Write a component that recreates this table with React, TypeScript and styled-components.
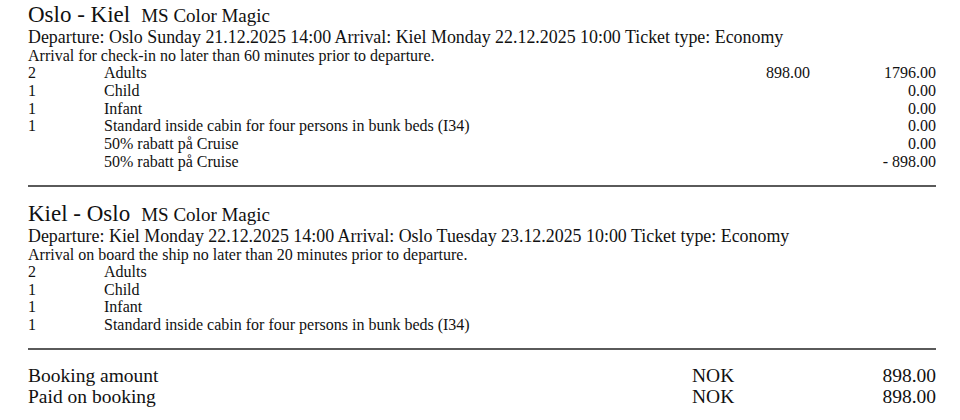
import styled, { createGlobalStyle } from 'styled-components'

const GlobalStyle = createGlobalStyle`
  html, body {
    margin: 0;
    padding: 0;
    background: #ffffff;
  }
  body {
    font-family: "Liberation Serif", "Times New Roman", serif;
    color: #111111;
  }
`

const Page = styled.div`
  padding: 3px 24px 0 28px;
  width: 960px;
  box-sizing: border-box;
`

const Section = styled.section`
  display: flex;
  flex-direction: column;
`

const TitleRow = styled.div`
  display: flex;
  align-items: baseline;
  gap: 11px;
  line-height: 24px;
`

const Route = styled.span`
  font-size: 23px;
`

const Ship = styled.span`
  font-size: 19px;
`

const TripInfo = styled.div`
  font-size: 17.9px;
  line-height: 19px;
`

const Notice = styled.div`
  font-size: 16px;
  line-height: 17px;
`

const Items = styled.div`
  display: grid;
  grid-template-columns: 76px 1fr 120px 126px;
  font-size: 16px;
  line-height: 17.8px;
`

const Cell = styled.div<{ $right?: boolean }>`
  text-align: ${p => (p.$right ? 'right' : 'left')};
  white-space: nowrap;
`

const Rule = styled.hr`
  border: none;
  border-top: 2px solid #5a5a5a;
  margin: 14px 0 15px;
`

const Totals = styled.div`
  display: grid;
  grid-template-columns: 1fr 118px 126px;
  font-size: 19.5px;
  line-height: 21px;
`

interface Item {
  qty: string
  text: string
  unit?: string
  total?: string
}

interface Leg {
  route: string
  ship: string
  info: string
  notice: string
  items: Item[]
}

const legs: Leg[] = [
  {
    route: 'Oslo - Kiel',
    ship: 'MS Color Magic',
    info: 'Departure: Oslo Sunday 21.12.2025 14:00 Arrival: Kiel Monday 22.12.2025 10:00 Ticket type: Economy',
    notice: 'Arrival for check-in no later than 60 minutes prior to departure.',
    items: [
      { qty: '2', text: 'Adults', unit: '898.00', total: '1796.00' },
      { qty: '1', text: 'Child', total: '0.00' },
      { qty: '1', text: 'Infant', total: '0.00' },
      { qty: '1', text: 'Standard inside cabin for four persons in bunk beds (I34)', total: '0.00' },
      { qty: '', text: '50% rabatt på Cruise', total: '0.00' },
      { qty: '', text: '50% rabatt på Cruise', total: '- 898.00' },
    ],
  },
  {
    route: 'Kiel - Oslo',
    ship: 'MS Color Magic',
    info: 'Departure: Kiel Monday 22.12.2025 14:00 Arrival: Oslo Tuesday 23.12.2025 10:00 Ticket type: Economy',
    notice: 'Arrival on board the ship no later than 20 minutes prior to departure.',
    items: [
      { qty: '2', text: 'Adults' },
      { qty: '1', text: 'Child' },
      { qty: '1', text: 'Infant' },
      { qty: '1', text: 'Standard inside cabin for four persons in bunk beds (I34)' },
    ],
  },
]

const totals = [
  { label: 'Booking amount', currency: 'NOK', amount: '898.00' },
  { label: 'Paid on booking', currency: 'NOK', amount: '898.00' },
]

const App = () => {
  return (
    <Page>
      <GlobalStyle />
      {legs.map(leg => (
        <Section key={leg.route}>
          <TitleRow>
            <Route>{leg.route}</Route>
            <Ship>{leg.ship}</Ship>
          </TitleRow>
          <TripInfo>{leg.info}</TripInfo>
          <Notice>{leg.notice}</Notice>
          <Items>
            {leg.items.map((item, i) => (
              <>
                <Cell key={`q${i}`}>{item.qty}</Cell>
                <Cell key={`t${i}`}>{item.text}</Cell>
                <Cell key={`u${i}`} $right>{item.unit ?? ''}</Cell>
                <Cell key={`s${i}`} $right>{item.total ?? ''}</Cell>
              </>
            ))}
          </Items>
          <Rule />
        </Section>
      ))}
      <Totals>
        {totals.map(row => (
          <>
            <Cell key={`${row.label}l`}>{row.label}</Cell>
            <Cell key={`${row.label}c`}>{row.currency}</Cell>
            <Cell key={`${row.label}a`} $right>{row.amount}</Cell>
          </>
        ))}
      </Totals>
    </Page>
  )
}

export default App
